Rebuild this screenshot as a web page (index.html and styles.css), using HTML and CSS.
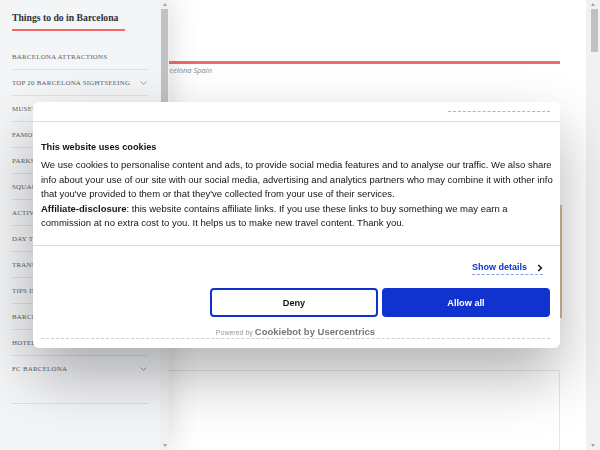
FILE: index.html
```html
<!DOCTYPE html>
<html>
<head>
    <meta charset="UTF-8">
    <title>Things to do in Barcelona</title>
    <link rel="stylesheet" href="styles.css">
</head>
<body>
    <div id="wrap">
        <!--page content behind the menu and the dialog-->
        <div class="main">
            <div class="hero-line"></div>
            <p class="caption">Barcelona Spain</p>
            <div class="hero-img"></div>
            <div class="card"></div>
        </div>
        <div class="scrollbar page-bar">
            <span class="arrow up"></span>
            <span class="thumb"></span>
            <span class="arrow down"></span>
        </div>
    </div>

    <!--side menu-->
    <div class="sidebar">
        <div class="menu">
            <h3 class="menu-title"><span>Things to do in Barcelona</span></h3>
            <ul class="menu-list">
                <li>Barcelona attractions</li>
                <li>Top 20 Barcelona sightseeing <svg class="chev" width="7" height="4" viewBox="0 0 7 4"><polyline points="0.5,0.5 3.5,3.3 6.5,0.5"/></svg></li>
                <li>Museums in Barcelona</li>
                <li>Famous buildings</li>
                <li>Parks in Barcelona</li>
                <li>Squares</li>
                <li>Activities</li>
                <li>Day trips</li>
                <li>Transport</li>
                <li>Tips in Barcelona</li>
                <li>Barcelona beaches</li>
                <li>Hotels</li>
                <li>FC Barcelona <svg class="chev" width="7" height="4" viewBox="0 0 7 4"><polyline points="0.5,0.5 3.5,3.3 6.5,0.5"/></svg></li>
            </ul>
            <div class="menu-end"></div>
        </div>
        <div class="scrollbar menu-bar">
            <span class="arrow up"></span>
            <span class="thumb"></span>
            <span class="arrow down"></span>
        </div>
    </div>

    <!--cookie consent dialog-->
    <div class="cookie">
        <div class="cookie-head">
            <span class="logo-line"></span>
        </div>
        <div class="cookie-body">
            <h2>This website uses cookies</h2>
            <p>We use cookies to personalise content and ads, to provide social media features and to analyse our traffic. We also share info about your use of our site with our social media, advertising and analytics partners who may combine it with other info that you've provided to them or that they've collected from your use of their services.<br><b>Affiliate-disclosure</b>: this website contains affiliate links. If you use these links to buy something we may earn a commission at no extra cost to you. It helps us to make new travel content. Thank you.</p>
        </div>
        <div class="cookie-foot">
            <div class="details-row">
                <a class="details">Show details <svg width="6" height="8" viewBox="0 0 6 8"><polyline points="1.2,1 4.4,4 1.2,7"/></svg></a>
            </div>
            <div class="buttons">
                <button class="btn deny">Deny</button>
                <button class="btn allow">Allow all</button>
            </div>
            <p class="powered">Powered by <b>Cookiebot by Usercentrics</b></p>
        </div>
    </div>
</body>
</html>
```

FILE: styles.css
```css
body{margin:0;font-family:"Liberation Sans",Arial,sans-serif;background:#fff;}
ul,li,p,h2,h3{margin:0;padding:0;list-style:none;}

#wrap{
    display:flex;
    height:450px;
    overflow:hidden;
}
.main{
    flex:1;
    padding:61px 26px 0 40px;
}
.hero-line{
    height:3px;
    background:#f06b6b;
}
.caption{
    padding-left:118px;
    font-family:"Open Sans",sans-serif;
    font-style:italic;
    font-size:7.5px;
    line-height:12px;
    color:#8a8a8a;
}
.hero-img{
    margin-top:129px;
    margin-right:-2px;
    height:113px;
    background:#d4bd98;
}
.card{
    margin-top:52px;
    height:120px;
    border:1px solid #e6e6e6;
    border-radius:2px;
}

/*fake scrollbars*/
.scrollbar{
    display:flex;
    flex-direction:column;
    align-items:center;
    background:#f1f1f1;
}
.scrollbar .arrow{
    width:0;
    height:0;
    border-left:2.5px solid transparent;
    border-right:2.5px solid transparent;
}
.scrollbar .up{
    margin:3px 0 3px;
    border-bottom:3px solid #a3a3a3;
}
.scrollbar .down{
    margin:auto 0 3px;
    border-top:3px solid #a3a3a3;
}
.scrollbar .thumb{
    background:#c1c1c1;
}
.page-bar{
    width:14px;
}
.page-bar .thumb{
    width:7px;
    height:43px;
    margin-left:3px;
}
.menu-bar{
    width:9px;
}
.menu-bar .thumb{
    width:7px;
    height:93px;
}

/*side menu*/
.sidebar{
    position:fixed;
    top:0;
    left:0;
    bottom:0;
    display:flex;
    box-shadow:4px 0 26px rgba(0,0,0,.13);
    z-index:5;
}
.menu{
    width:160px;
    box-sizing:border-box;
    padding:0 12px;
    background:#f4f5f7;
}
.menu-title{
    padding-top:11px;
    font-family:"Liberation Serif",serif;
    font-size:9.7px;
    line-height:14px;
    color:#303235;
}
.menu-title span{
    display:inline-block;
    padding:0 7px 4px 0;
    border-bottom:2px solid #f26666;
}
.menu-list{
    margin-top:13px;
}
.menu-list li{
    display:flex;
    align-items:center;
    justify-content:space-between;
    height:25px;
    border-bottom:1px solid #dfe0e3;
    font-family:"Liberation Serif",serif;
    font-size:6.9px;
    letter-spacing:.25px;
    text-transform:uppercase;
    color:#5c5d60;
    white-space:nowrap;
}
.menu-list li:last-child{
    border-bottom:none;
}
.chev{
    margin-right:1px;
    fill:none;
    stroke:#9a9b9e;
    stroke-width:1;
}
.menu-end{
    margin-top:22px;
    border-top:1px solid #dcdde0;
}

/*cookie dialog*/
.cookie{
    position:fixed;
    left:33px;
    top:102px;
    width:527px;
    background:#fff;
    border-radius:6px;
    box-shadow:0 28px 60px rgba(0,0,0,.3);
    color:#141414;
    z-index:10;
}
.cookie-head{
    display:flex;
    align-items:center;
    justify-content:flex-end;
    height:19px;
    padding-right:10px;
    border-bottom:1px solid #dcdcdc;
}
.logo-line{
    width:102px;
    border-top:1px dashed #b4b4b4;
}
.cookie-body{
    padding:18px 4px 15px 8px;
}
.cookie-body h2{
    margin-bottom:4px;
    font-size:9.2px;
    line-height:14.4px;
}
.cookie-body p{
    font-size:9.5px;
    line-height:14.4px;
}
.cookie-foot{
    border-top:1px solid #dcdcdc;
    padding:15px 10px 9px 8px;
}
.details-row{
    display:flex;
    justify-content:flex-end;
    padding-right:7px;
}
.details{
    display:flex;
    align-items:center;
    gap:10px;
    font-size:9px;
    font-weight:bold;
    line-height:13px;
    color:#1032cf;
    border-bottom:1px dashed #8d9de6;
}
.details svg{
    fill:none;
    stroke:#141414;
    stroke-width:1.5;
}
.buttons{
    display:flex;
    justify-content:flex-end;
    gap:4px;
    margin-top:13px;
}
.btn{
    flex:0 0 168px;
    height:29px;
    border:2px solid #1032cf;
    border-radius:4px;
    font-family:"Liberation Sans",Arial,sans-serif;
    font-size:9.2px;
    font-weight:bold;
}
.deny{
    background:#fff;
    color:#141414;
}
.allow{
    background:#1032cf;
    color:#fff;
}
.powered{
    margin-top:9px;
    text-align:center;
    font-size:7px;
    line-height:11px;
    color:#999;
    border-bottom:1px dashed #cfcfcf;
}
.powered b{
    font-size:9.5px;
    color:#777;
}
```
